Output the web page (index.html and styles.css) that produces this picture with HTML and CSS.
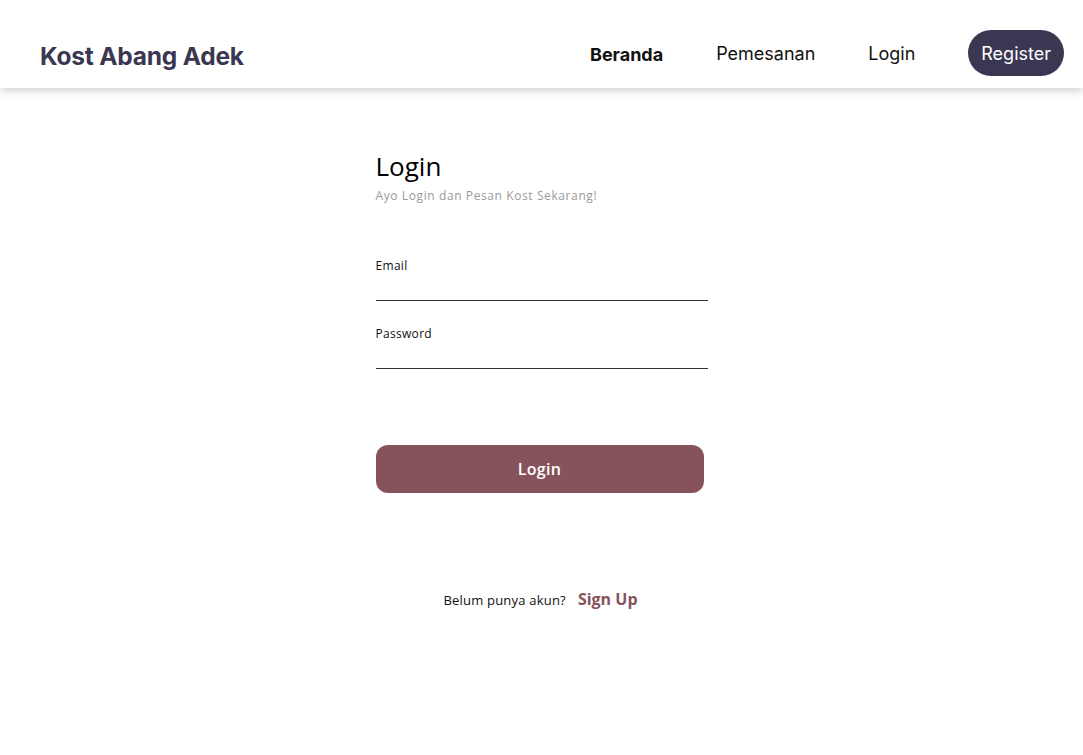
FILE: index.html
```html
<!DOCTYPE html>
<html lang="id">
<head>
<meta charset="utf-8">
<title>Login - Kost Abang Adek</title>
<link rel="stylesheet" href="styles.css">
</head>
<body>
<header class="header">
  <div class="brand">Kost Abang Adek</div>
  <nav class="nav">
    <a class="nav-link active" href="#">Beranda</a>
    <a class="nav-link" href="#">Pemesanan</a>
    <a class="nav-link" href="#">Login</a>
    <a class="nav-btn" href="#">Register</a>
  </nav>
</header>
<main class="main">
  <form class="form">
    <h1 class="title">Login</h1>
    <p class="subtitle">Ayo Login dan Pesan Kost Sekarang!</p>
    <label class="field field-first">
      <span class="label">Email</span>
      <input class="input" type="email">
    </label>
    <label class="field">
      <span class="label">Password</span>
      <input class="input" type="password">
    </label>
    <button class="submit" type="button">Login</button>
  </form>
  <div class="signup">
    <span class="signup-text">Belum punya akun?</span>
    <a class="signup-link" href="#">Sign Up</a>
  </div>
</main>
</body>
</html>
```

FILE: styles.css
```css
* { box-sizing: border-box; }
body {
  margin: 0;
  background: #fff;
  font-family: "Open Sans", "Noto Sans", sans-serif;
  color: #000;
}
.header {
  height: 88px;
  display: flex;
  align-items: center;
  justify-content: space-between;
  padding: 14px 19px 0 40px;
  background: #fff;
  box-shadow: 0 3px 8px rgba(0, 0, 0, 0.18);
}
.brand {
  font-family: "Inter", sans-serif;
  font-weight: 700;
  font-size: 24.5px;
  color: #3a3753;
  margin-top: 9px;
  letter-spacing: -0.2px;
}
.nav {
  display: flex;
  align-items: center;
  gap: 53px;
  margin-top: 4px;
}
.nav-link {
  font-family: "Inter", sans-serif;
  font-size: 18px;
  color: #111;
  text-decoration: none;
}
.nav-link.active {
  font-weight: 700;
  margin-top: 3px;
}
.nav-btn {
  font-family: "Inter", sans-serif;
  font-size: 18px;
  color: #fff;
  background: #3a3753;
  border-radius: 23px;
  height: 46px;
  padding: 0 13px;
  display: flex;
  align-items: center;
  text-decoration: none;
}
.main {
  display: flex;
  flex-direction: column;
  align-items: center;
}
.form {
  width: 332px;
  margin-top: 60px;
  display: flex;
  flex-direction: column;
}
.title {
  margin: 0;
  font-size: 26px;
  font-weight: 500;
  line-height: 36px;
}
.subtitle {
  margin: 2px 0 0;
  font-size: 12px;
  color: #9a9a9a;
  line-height: 20px;
  letter-spacing: 0.6px;
}
.field {
  display: flex;
  flex-direction: column;
  margin-top: 24px;
}
.field-first { margin-top: 51px; }
.label {
  font-size: 12px;
  font-weight: 500;
  color: #111;
  line-height: 18px;
  letter-spacing: 0.3px;
}
.input {
  border: none;
  border-bottom: 1px solid #333;
  height: 26px;
  outline: none;
  padding: 0;
  font: inherit;
}
.submit {
  width: 328px;
  height: 48px;
  margin-top: 76px;
  border: none;
  border-radius: 12px;
  background: #87535b;
  color: #fff;
  font-family: "Open Sans", sans-serif;
  font-size: 16px;
  font-weight: 600;
  letter-spacing: 0.3px;
}
.signup {
  margin-top: 95px;
  display: flex;
  align-items: baseline;
  gap: 12px;
  margin-left: -2px;
}
.signup-text {
  font-size: 13px;
  color: #111;
  letter-spacing: 0.2px;
}
.signup-link {
  font-size: 16px;
  font-weight: 700;
  color: #87535b;
  text-decoration: none;
}
```
